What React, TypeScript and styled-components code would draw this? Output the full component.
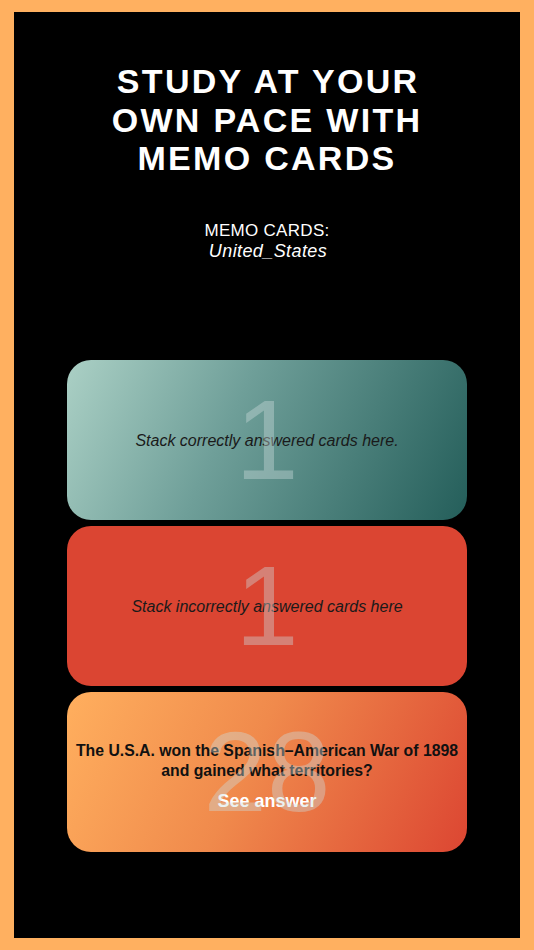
import styled, { createGlobalStyle } from "styled-components";

const GlobalStyle = createGlobalStyle`
	html, body {
		margin: 0;
		padding: 0;
		background: #ffb060;
	}
	* {
		box-sizing: border-box;
	}
`;

const Frame = styled.div`
	margin: 12px 14px;
	height: 926px;
	background: #000;
	display: flex;
	flex-direction: column;
	align-items: center;
	font-family: "Liberation Sans", Arial, sans-serif;
	color: #fff;
`;

const Title = styled.h1`
	margin: 50px 0 0;
	font-size: 34px;
	line-height: 38.5px;
	font-weight: 700;
	text-align: center;
	letter-spacing: 2.3px;
	text-indent: 2.3px;
`;

const Deck = styled.div`
	margin-top: 43px;
	text-align: center;
	font-size: 17px;
	line-height: 20px;
	letter-spacing: 0.3px;
`;

const DeckName = styled.div`
	font-style: italic;
	font-size: 18px;
	letter-spacing: 0.4px;
	padding-left: 2px;
`;

const Stack = styled.div`
	margin-top: 99px;
	display: flex;
	flex-direction: column;
	gap: 6px;
`;

const Card = styled.div<{ $bg: string }>`
	position: relative;
	width: 400px;
	height: 160px;
	border-radius: 24px;
	background: ${(p) => p.$bg};
	display: flex;
	flex-direction: column;
	align-items: center;
	justify-content: center;
	overflow: hidden;
	color: #111;
`;

const Hint = styled.div`
	font-style: italic;
	font-size: 16px;
	color: #1a1a1a;
	margin-top: 2px;
`;

const Question = styled.div`
	margin-top: 10px;
	font-size: 15.8px;
	line-height: 20px;
	font-weight: 700;
	text-align: center;
	color: #111;
	padding: 0 6px;
`;

const AnswerButton = styled.button`
	margin-top: 10px;
	background: none;
	border: none;
	padding: 0;
	color: #fff;
	font-family: inherit;
	font-size: 18px;
	font-weight: 700;
`;

const Count = styled.span`
	position: absolute;
	left: 0;
	right: 0;
	top: 50%;
	transform: translateY(-50%);
	text-align: center;
	font-size: 114px;
	line-height: 1;
	color: rgba(205, 220, 220, 0.4);
	pointer-events: none;
`;

const App = () => {
	return (
		<>
			<GlobalStyle />
			<Frame>
				<Title>
					STUDY AT YOUR
					<br />
					OWN PACE WITH
					<br />
					MEMO CARDS
				</Title>

				<Deck>
					MEMO CARDS:
					<DeckName>United_States</DeckName>
				</Deck>

				<Stack>
					<Card $bg="linear-gradient(115deg, #abd0c5 0%, #6f9f99 40%, #245e5a 100%)">
						<Hint>Stack correctly answered cards here.</Hint>
						<Count>1</Count>
					</Card>
					<Card $bg="#db4532">
						<Hint>Stack incorrectly answered cards here</Hint>
						<Count>1</Count>
					</Card>
					<Card $bg="linear-gradient(115deg, #ffaf5e 0%, #f08a4c 45%, #dc4632 100%)">
						<Question>
							The U.S.A. won the Spanish–American War of 1898
							<br />
							and gained what territories?
						</Question>
						<AnswerButton>See answer</AnswerButton>
						<Count>28</Count>
					</Card>
				</Stack>
			</Frame>
		</>
	);
};

export default App;
